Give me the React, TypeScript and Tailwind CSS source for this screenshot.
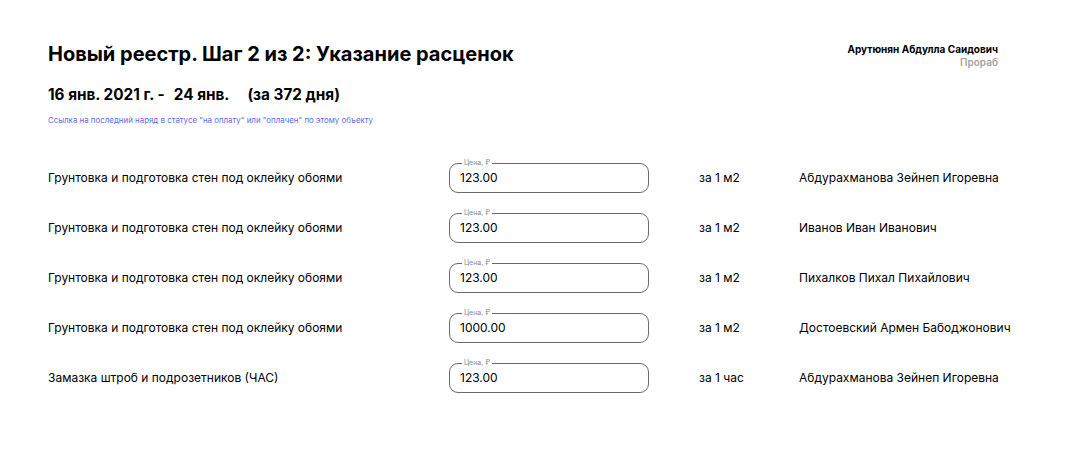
import React from "react";

interface PriceRow {
  id: number;
  work: string;
  price: string;
  unit: string;
  worker: string;
}

const rows: PriceRow[] = [
  { id: 1, work: "Грунтовка и подготовка стен под оклейку обоями", price: "123.00", unit: "за 1 м2", worker: "Абдурахманова Зейнеп Игоревна" },
  { id: 2, work: "Грунтовка и подготовка стен под оклейку обоями", price: "123.00", unit: "за 1 м2", worker: "Иванов Иван Иванович" },
  { id: 3, work: "Грунтовка и подготовка стен под оклейку обоями", price: "123.00", unit: "за 1 м2", worker: "Пихалков Пихал Пихайлович" },
  { id: 4, work: "Грунтовка и подготовка стен под оклейку обоями", price: "1000.00", unit: "за 1 м2", worker: "Достоевский Армен Бабоджонович" },
  { id: 5, work: "Замазка штроб и подрозетников (ЧАС)", price: "123.00", unit: "за 1 час", worker: "Абдурахманова Зейнеп Игоревна" },
];

const App = () => {
  return (
    <div className="w-[1073px] h-[453px] bg-white text-black font-['Inter','Liberation_Sans',sans-serif] pl-[48px] pr-[75px] pt-[40px]">
      <div className="flex justify-between items-start">
        <div>
          <h1 className="text-[20px] leading-[28px] font-bold">
            Новый реестр. Шаг 2 из 2: Указание расценок
          </h1>
          <div className="mt-[17px] text-[15.3px] leading-[20px] font-bold flex">
            <span>16 янв. 2021 г. -</span>
            <span className="ml-[9px]">24 янв.</span>
            <span className="ml-[18px]">(за 372 дня)</span>
          </div>
          <p className="mt-[10px] text-[7.9px] leading-[10px] text-[#5b6ee0]">
            Ссылка на последний наряд в статусе "на оплату" или "оплачен" по этому объекту
          </p>
        </div>
        <div className="text-right mt-[3px]">
          <p className="text-[10px] leading-[13px] font-bold">Арутюнян Абдулла Саидович</p>
          <p className="text-[10px] leading-[13px] font-semibold text-[#a3a3a3]">Прораб</p>
        </div>
      </div>

      <div className="mt-[38px] flex flex-col gap-[20px]">
        {rows.map((row) => (
          <div key={row.id} className="flex items-center h-[30px] text-[12px]">
            <span className="w-[401px] shrink-0">{row.work}</span>
            <fieldset className="w-[200px] shrink-0 h-[34px] -mt-[4px] border border-[#6b6b6b] rounded-[9px] px-[7px] pt-0 pb-0">
              <legend className="text-[7px] leading-[8px] text-[#8a8a8a] px-[2px] ml-[5px]">Цена, ₽</legend>
              <span className="block text-[12px] leading-[18px] mt-[2px] ml-[3px]">{row.price}</span>
            </fieldset>
            <span className="ml-[50px] w-[100px] shrink-0">{row.unit}</span>
            <span className="whitespace-nowrap">{row.worker}</span>
          </div>
        ))}
      </div>
    </div>
  );
};

export default App;
